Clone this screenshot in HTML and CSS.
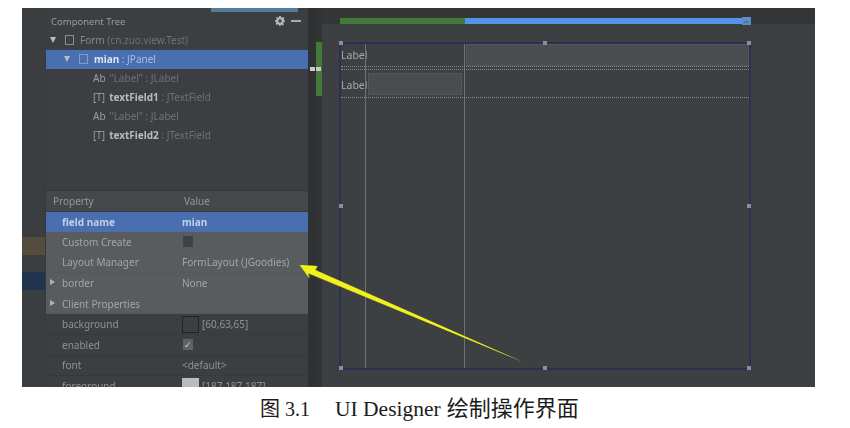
FILE: index.html
```html
<!DOCTYPE html>
<html lang="zh">
<head>
<meta charset="utf-8">
<title>UI Designer</title>
<link rel="stylesheet" href="styles.css">
</head>
<body>
<figure class="figure">
  <div class="shot">
    <div class="strip">
      <div class="strip-brown"></div>
      <div class="strip-navy"></div>
    </div>
    <div class="panel">
      <div class="top-tab"></div>
      <section class="tree">
        <header class="tree-head">
          <span>Component Tree</span>
          <svg class="gear" viewBox="0 0 12 12"><path d="M5 0h2l.3 1.6 1.2.5L9.900 1.200l1.400 1.400-.9 1.400.5 1.200L12 5v2l-1.600.3-.5 1.200.9 1.400-1.400 1.400-1.400-.9-1.200.5L7 12H5l-.3-1.600-1.200-.5-1.400.9L.7 9.400l.9-1.400-.5-1.200L0 7V5l1.600-.3.5-1.200-.9-1.400L2.600 1.200 4 2.100l.7-.5zM6 4a2 2 0 1 0 0 4 2 2 0 0 0 0-4z" fill-rule="evenodd"/></svg>
          <span class="minus"></span>
        </header>
        <div class="node lvl0"><i class="down"></i><i class="box"></i><b class="dim-b">Form</b><span class="dimmer">&nbsp;(cn.zuo.view.Test)</span></div>
        <div class="node lvl1 sel"><i class="down"></i><i class="box"></i><b>mian</b><span>&nbsp;: JPanel</span></div>
        <div class="node lvl2"><em class="ic">Ab</em><span class="dimmer">"Label" : JLabel</span></div>
        <div class="node lvl2"><em class="ic">[T]</em><b>textField1</b><span class="dimmer">&nbsp;: JTextField</span></div>
        <div class="node lvl2"><em class="ic">Ab</em><span class="dimmer">"Label" : JLabel</span></div>
        <div class="node lvl2"><em class="ic">[T]</em><b>textField2</b><span class="dimmer">&nbsp;: JTextField</span></div>
      </section>
      <section class="props">
        <div class="prow phead"><span class="pk">Property</span><span class="pv">Value</span></div>
        <div class="prow psel"><span class="pk"><b>field name</b></span><span class="pv"><b>mian</b></span></div>
        <div class="prow plite"><span class="pk">Custom Create</span><span class="pv"><i class="chk off"></i></span></div>
        <div class="prow plite"><span class="pk">Layout Manager</span><span class="pv">FormLayout (JGoodies)</span></div>
        <div class="prow plite"><span class="pk"><i class="right"></i>border</span><span class="pv">None</span></div>
        <div class="prow plite"><span class="pk"><i class="right"></i>Client Properties</span><span class="pv"></span></div>
        <div class="prow"><span class="pk">background</span><span class="pv"><i class="swatch dark"></i>[60,63,65]</span></div>
        <div class="prow"><span class="pk">enabled</span><span class="pv"><i class="chk">✓</i></span></div>
        <div class="prow"><span class="pk">font</span><span class="pv">&lt;default&gt;</span></div>
        <div class="prow"><span class="pk">foreground</span><span class="pv"><i class="swatch light"></i>[187,187,187]</span></div>
      </section>
    </div>
    <div class="gutter">
      <div class="side-ruler"></div>
      <div class="grip"><i></i><i></i></div>
    </div>
    <div class="designer">
      <div class="ruler"><div class="r-green"></div><div class="r-blue"><span>⇔</span></div></div>
      <div class="form">
        <div class="cell label">Label</div>
        <div class="cell"></div>
        <div class="cell field wide"></div>
        <div class="cell label second">Label</div>
        <div class="cell field second narrow"></div>
        <i class="h h1"></i><i class="h h2"></i><i class="h h3"></i><i class="h h4"></i>
        <i class="h h5"></i><i class="h h6"></i><i class="h h7"></i><i class="h h8"></i>
        <i class="vl v1"></i><i class="vl v2"></i>
        <i class="hl l1"></i><i class="hl l2"></i><i class="hl l3"></i>
      </div>
    </div>
    <svg class="arrow" viewBox="0 0 793 379" width="793" height="379">
      <polygon class="arrow-glow" points="277,257 296,258 294,262 501,354 287,266 288,271"/>
      <polygon class="arrow-fill" points="278,257 295,258 293,262 501,354 286,265 287,270"/>
    </svg>
  </div>
  <figcaption class="caption"><span class="cap-num">图 3.1</span><span class="cap-en">UI Designer</span><span class="cap-zh">绘制操作界面</span></figcaption>
</figure>
</body>
</html>
```
FILE: styles.css
```css
* { box-sizing: border-box; }
html, body { margin: 0; background: #fff; }
body { width: 850px; height: 428px; overflow: hidden; }
.figure { margin: 0; padding: 8px 0 0 22px; }

.shot {
  position: relative;
  display: flex;
  width: 793px;
  height: 379px;
  overflow: hidden;
  background: #3c3f41;
  font-family: "Noto Sans", "Liberation Sans", sans-serif;
  font-size: 10px;
  color: #a9abac;
  filter: blur(0.55px);
}

.strip { width: 24px; flex: none; background: #3b3e40; padding-top: 229px; border-right: 1px solid #37393b; }
.strip-brown { height: 18px; background: #544c3c; }
.strip-navy { height: 18px; margin-top: 17px; background: #21364e; }

.panel { position: relative; width: 262px; flex: none; display: flex; flex-direction: column; background: #3c3f41; }
.top-tab { position: absolute; left: 165px; top: 0; width: 87px; height: 4px; background: #557c98; }

.tree { height: 183px; flex: none; border-bottom: 1px solid #353739; }
.tree-head { display: flex; align-items: center; height: 25px; padding: 1px 7px 0 5px; color: #9a9c9d; font-size: 9.500px; }
.tree-head span:first-child { flex: 1; }
.gear { width: 10px; height: 10px; fill: #b4b6b7; margin-right: 6px; }
.minus { width: 10px; height: 1.500px; background: #a9abac; }

.node { display: flex; align-items: center; height: 19px; padding-bottom: 1.500px; white-space: nowrap; font-size: 10px; }
.node b { font-weight: 700; color: #b9bbbc; }
.node .dimmer { color: #6f7274; }
.node .dim-b { font-weight: 400; color: #85888a; }
.lvl0 { padding: 0 0 3px 4px; height: 17px; }
.lvl1 { padding-left: 18px; }
.lvl2 { padding-left: 47px; }
.sel { background: #4a6fb0; color: #a8bede; }
.sel b { color: #dbe3f0; }
.down { width: 0; height: 0; margin-right: 9px; border-left: 3.500px solid transparent; border-right: 3.500px solid transparent; border-top: 6px solid #b9bbbc; }
.box { width: 9px; height: 10px; margin-right: 6px; border: 1px solid #8a8d8f; }
.sel .box { border-color: #7f9ccc; }
.ic { font-style: normal; color: #9a9c9d; margin-right: 4px; min-width: 12px; }

.props { flex: 1; min-height: 0; overflow: hidden; }
.prow { display: flex; align-items: center; height: 20.600px; border-bottom: 1px solid #37393b; white-space: nowrap; color: #8f9193; }
.phead { background: #45484a; color: #95979a; height: 20.500px; }
.psel { background: #4a6fb0; color: #c2d0e6; border-bottom: 0; }
.plite { background: #595c5d; border-bottom-color: #55585a; color: #a3a5a6; }
.pk { position: relative; display: block; width: 135px; padding-left: 16px; flex: none; }
.phead .pk { padding-left: 7px; }
.pv { display: flex; align-items: center; padding-left: 1px; gap: 3px; }
.phead .pv { padding-left: 3px; }
.right { position: absolute; left: 4px; top: 3px; width: 0; height: 0; border-top: 3.500px solid transparent; border-bottom: 3.500px solid transparent; border-left: 5px solid #b0b2b3; }
.chk { display: block; width: 10px; height: 11px; margin-left: 1px; background: #5f6264; color: #d0d2d3; font-style: normal; font-size: 9px; line-height: 11px; text-align: center; }
.chk.off { background: #3f4143; }
.swatch { display: block; width: 17px; height: 17px; margin-right: 0; }
.swatch.dark { background: #3c3f41; border: 1px solid #222; }
.swatch.light { background: #bbbbbb; }

.gutter { position: relative; width: 14px; flex: none; background: #313335; border-left: 8px solid #2f3133; padding: 34px 0 0 0; }
.side-ruler { width: 6px; height: 54px; background: #44793a; }
.grip { position: absolute; left: -6px; top: 59px; display: flex; gap: 1px; }
.grip i { display: block; width: 5px; height: 4px; background: #c9cbcc; }

.designer { flex: 1; min-width: 0; padding-left: 18px; background: linear-gradient(#333537 16px, #3d4042 16px); }
.ruler { display: flex; height: 6px; margin-top: 10px; width: 411px; }
.r-green { width: 125px; background: #44793a; }
.r-blue { flex: 1; background: #5594e6; position: relative; }
.r-blue span { position: absolute; right: 0; top: -1px; width: 9px; height: 8px; color: #28405e; font-size: 8px; line-height: 8px; background: #5c8cc6; }

.form {
  position: relative;
  display: grid;
  grid-template-columns: 25px 99px 1fr;
  grid-template-rows: 24px 31px;
  width: 412px;
  height: 328px;
  margin: 18px 0 0 -1px;
  border: 2px solid #2e2f52;
  color: #a5a7a8;
  font-size: 10.500px;
}
.cell { min-width: 0; }
.label { display: flex; align-items: center; padding-bottom: 3px; }
.label.second { grid-row: 2; grid-column: 1; padding: 3px 0 0; }
.field { background: #4a4d4e; border: 1px solid #55585a; }
.wide { margin: 0 0 2px 1px; }
.narrow { grid-row: 2; grid-column: 2; margin: 5px 3px 4px 2px; }

.h { position: absolute; width: 4px; height: 4px; background: #8d8f92; }
.h1 { left: -2px; top: -3px; }
.h2 { left: 202px; top: -3px; }
.h3 { left: 406px; top: -3px; }
.h4 { left: -2px; top: 160px; }
.h5 { left: 406px; top: 160px; }
.h6 { left: -2px; top: 322px; }
.h7 { left: 202px; top: 322px; }
.h8 { left: 406px; top: 322px; }

.vl { position: absolute; top: 0; bottom: 0; width: 1px; background: #6f7274; }
.v1 { left: 24px; }
.v2 { left: 123px; }
.hl { position: absolute; left: 0; right: 0; height: 0; border-top: 1px dotted #85888a; }
.l1 { top: 22px; }
.l2 { top: 25px; }
.l3 { top: 53px; }

.arrow { position: absolute; left: 0; top: 0; pointer-events: none; }
.arrow-glow { fill: #8b8f3a; }
.arrow-fill { fill: #f2f21a; }

.caption {
  margin: 0 0 0 -22px;
  padding-left: 260px;
  width: 850px;
  height: 41px;
  line-height: 44px;
  font-family: "Liberation Serif", "Noto Sans CJK SC", serif;
  font-size: 20px;
  color: #1c1c1c;
  white-space: nowrap;
}
.cap-en { margin-left: 25px; font-size: 21.500px; }
.cap-zh { margin-left: 6px; font-size: 22px; }
```
